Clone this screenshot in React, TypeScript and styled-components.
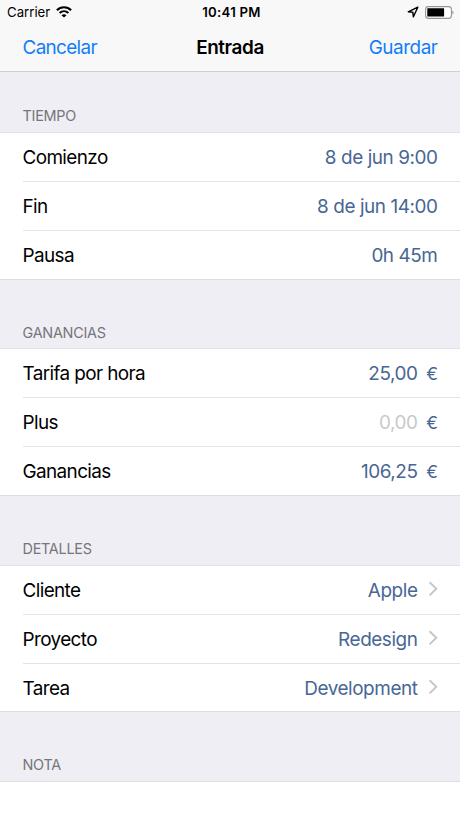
import React from "react";
import styled, { createGlobalStyle } from "styled-components";

const GlobalStyle = createGlobalStyle`
  *, *::before, *::after { box-sizing: border-box; }
  html, body { margin: 0; padding: 0; background: #efeef4; }
`;

const Screen = styled.div`
  width: 460px;
  height: 818px;
  overflow: hidden;
  display: flex;
  flex-direction: column;
  background: #efeef4;
  color: #000;
  font-family: Inter, "Liberation Sans", sans-serif;
  font-size: 18.9px;
  line-height: 24px;
`;

const Header = styled.header`
  flex: none;
  height: 72px;
  background: #f8f8f9;
  border-bottom: 1px solid #cfcfd3;
`;

const StatusBar = styled.div`
  display: grid;
  grid-template-columns: 1fr auto 1fr;
  align-items: center;
  height: 23px;
  padding: 1px 6px 0 7px;
  font-size: 13.2px;
  line-height: 20px;
`;

const StatusGroup = styled.div<{ $end?: boolean }>`
  display: flex;
  align-items: center;
  justify-content: ${(p) => (p.$end ? "flex-end" : "flex-start")};
  gap: 6px;
`;

const Clock = styled.span`
  padding-left: 2px;
  font-weight: 600;
  letter-spacing: 0.25px;
`;

const NavBar = styled.nav`
  display: grid;
  grid-template-columns: 1fr auto 1fr;
  align-items: center;
  height: 48px;
  padding: 1px 22.5px 0;
`;

const NavButton = styled.button<{ $end?: boolean }>`
  justify-self: ${(p) => (p.$end ? "end" : "start")};
  padding: 0;
  border: 0;
  background: none;
  color: #127df8;
  font: inherit;
  letter-spacing: ${(p) => (p.$end ? -0.45 : -0.65)}px;
`;

const Title = styled.h1`
  margin: 0;
  font-size: 18.9px;
  font-weight: 600;
  letter-spacing: -0.4px;
`;

const SectionTitle = styled.h2<{ $first?: boolean }>`
  flex: none;
  display: flex;
  align-items: flex-end;
  height: ${(p) => (p.$first ? 61.2 : 70.63)}px;
  margin: 0;
  padding: 0 22.5px 6.8px;
  color: #75757a;
  font-size: 14.4px;
  font-weight: 400;
  line-height: 20px;
  letter-spacing: -0.25px;
`;

const Group = styled.div`
  flex: none;
  background: #fff;
  box-shadow: 0 -1px 0 #e2e1e6, 0 1px 0 #dedde2;
`;

const Row = styled.div`
  display: flex;
  align-items: center;
  justify-content: space-between;
  height: 47.9px;
  margin-left: 22.5px;
  padding: 2px 22.5px 0 0;

  & + & {
    height: 48.9px;
    border-top: 1px solid #e4e4e7;
  }
`;

const Label = styled.span`
  letter-spacing: -0.6px;
`;

const Value = styled.div`
  display: flex;
  align-items: center;
  color: #486695;
  letter-spacing: -0.42px;
`;

const Amount = styled.span<{ $empty?: boolean }>`
  color: ${(p) => (p.$empty ? "#c9c9cb" : "inherit")};
`;

const Trailing = styled.span`
  display: flex;
  justify-content: flex-end;
  width: 20px;
`;

const Euro = styled.span`
  font-size: 17.6px;
`;

const Note = styled.div`
  flex: 1;
  background: #fff;
  box-shadow: 0 -1px 0 #dedde2;
`;

const ChevronIcon = styled.svg`
  margin-bottom: 3px;
`;

const WifiIcon = () => (
  <svg width="16" height="12" viewBox="0 0 16 12" fill="none" stroke="#000" strokeWidth="2.1">
    <path d="M.9 4.2C4.9.3 11.1.3 15.1 4.2" />
    <path d="M3.6 6.9c2.5-2.3 6.3-2.3 8.8 0" />
    <path d="M8 11.6 5.5 9.2c1.4-1.3 3.6-1.3 5 0Z" fill="#000" stroke="none" />
  </svg>
);

const LocationIcon = () => (
  <svg width="12" height="12" viewBox="0 0 12 12" fill="none" stroke="#000" strokeWidth="1.4" strokeLinejoin="round">
    <path d="M10.8 1.2 1.2 5.8l4.6.4.6 4.6Z" />
  </svg>
);

const BatteryIcon = () => (
  <svg width="29" height="13" viewBox="0 0 29 13">
    <rect x=".6" y=".6" width="25.8" height="11.8" rx="2.8" fill="#fff" stroke="#96969a" strokeWidth="1.1" />
    <rect x="2.3" y="2.3" width="16.8" height="8.3" rx=".4" fill="#000" />
    <path d="M27.3 4.4q1.2.6 1.2 2t-1.2 2Z" fill="#96969a" />
  </svg>
);

const Chevron = () => (
  <ChevronIcon width="10" height="16" viewBox="0 0 10 16" fill="none" stroke="#c5c5ca" strokeWidth="1.9">
    <path d="M1.6 1.2 8.3 7.8l-6.7 6.6" />
  </ChevronIcon>
);

type Entry = { label: string; value: string; trailing?: "euro" | "chevron"; empty?: boolean };

const sections: { title: string; rows: Entry[] }[] = [
  {
    title: "TIEMPO",
    rows: [
      { label: "Comienzo", value: "8 de jun 9:00" },
      { label: "Fin", value: "8 de jun 14:00" },
      { label: "Pausa", value: "0h 45m" },
    ],
  },
  {
    title: "GANANCIAS",
    rows: [
      { label: "Tarifa por hora", value: "25,00", trailing: "euro" },
      { label: "Plus", value: "0,00", trailing: "euro", empty: true },
      { label: "Ganancias", value: "106,25", trailing: "euro" },
    ],
  },
  {
    title: "DETALLES",
    rows: [
      { label: "Cliente", value: "Apple", trailing: "chevron" },
      { label: "Proyecto", value: "Redesign", trailing: "chevron" },
      { label: "Tarea", value: "Development", trailing: "chevron" },
    ],
  },
];

export default function App() {
  return (
    <Screen>
      <GlobalStyle />
      <Header>
        <StatusBar>
          <StatusGroup>
            <span>Carrier</span>
            <WifiIcon />
          </StatusGroup>
          <Clock>10:41 PM</Clock>
          <StatusGroup $end>
            <LocationIcon />
            <BatteryIcon />
          </StatusGroup>
        </StatusBar>
        <NavBar>
          <NavButton>Cancelar</NavButton>
          <Title>Entrada</Title>
          <NavButton $end>Guardar</NavButton>
        </NavBar>
      </Header>
      {sections.map((section, i) => (
        <React.Fragment key={section.title}>
          <SectionTitle $first={i === 0}>{section.title}</SectionTitle>
          <Group>
            {section.rows.map((row) => (
              <Row key={row.label}>
                <Label>{row.label}</Label>
                <Value>
                  <Amount $empty={row.empty}>{row.value}</Amount>
                  {row.trailing && (
                    <Trailing>{row.trailing === "euro" ? <Euro>€</Euro> : <Chevron />}</Trailing>
                  )}
                </Value>
              </Row>
            ))}
          </Group>
        </React.Fragment>
      ))}
      <SectionTitle>NOTA</SectionTitle>
      <Note />
    </Screen>
  );
}
